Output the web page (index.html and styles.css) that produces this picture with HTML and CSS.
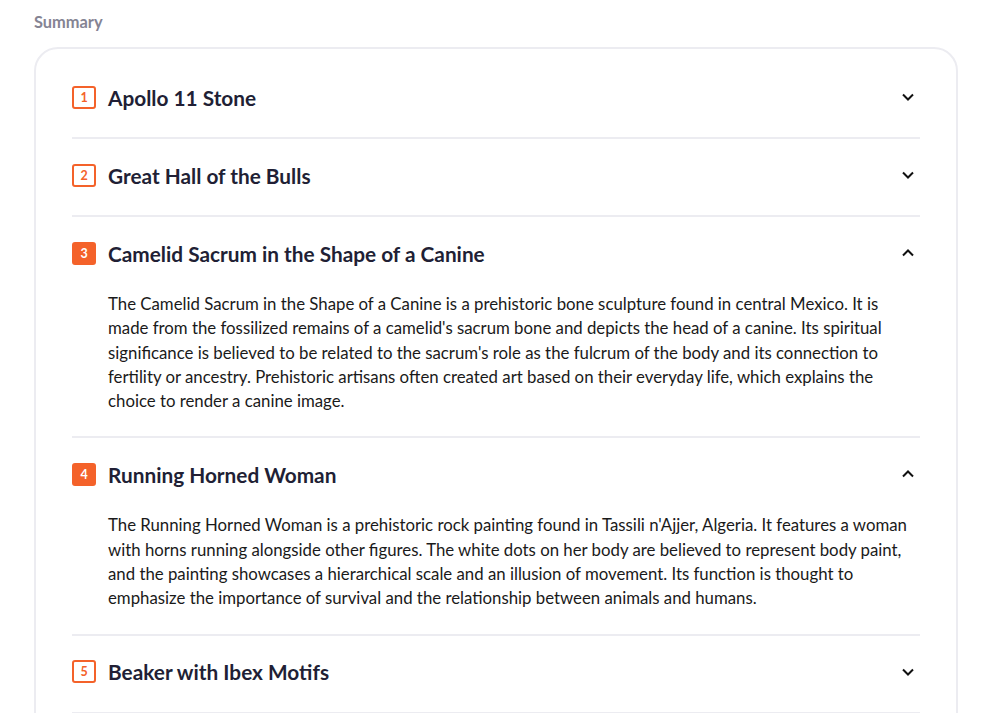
FILE: index.html
```html
<!DOCTYPE html>
<html>
<head>
<meta charset="utf-8">
<link rel="stylesheet" href="styles.css">
</head>
<body>
<div class="page">
  <div class="label">Summary</div>
  <div class="card">
    <div class="item">
      <div class="head"><span class="badge">1</span><span class="title">Apollo 11 Stone</span><svg class="chev" viewBox="0 0 12 8"><path d="M1 1.5l5 5 5-5" /></svg></div>
    </div>
    <div class="item">
      <div class="head"><span class="badge">2</span><span class="title">Great Hall of the Bulls</span><svg class="chev" viewBox="0 0 12 8"><path d="M1 1.5l5 5 5-5" /></svg></div>
    </div>
    <div class="item open">
      <div class="head"><span class="badge">3</span><span class="title">Camelid Sacrum in the Shape of a Canine</span><svg class="chev" viewBox="0 0 12 8"><path d="M1 6.5l5-5 5 5" /></svg></div>
      <p class="body">The Camelid Sacrum in the Shape of a Canine is a prehistoric bone sculpture found in central Mexico. It is made from the fossilized remains of a camelid's sacrum bone and depicts the head of a canine. Its spiritual significance is believed to be related to the sacrum's role as the fulcrum of the body and its connection to fertility or ancestry. Prehistoric artisans often created art based on their everyday life, which explains the choice to render a canine image.</p>
    </div>
    <div class="item open">
      <div class="head"><span class="badge">4</span><span class="title">Running Horned Woman</span><svg class="chev" viewBox="0 0 12 8"><path d="M1 6.5l5-5 5 5" /></svg></div>
      <p class="body">The Running Horned Woman is a prehistoric rock painting found in Tassili n'Ajjer, Algeria. It features a woman with horns running alongside other figures. The white dots on her body are believed to represent body paint, and the painting showcases a hierarchical scale and an illusion of movement. Its function is thought to emphasize the importance of survival and the relationship between animals and humans.</p>
    </div>
    <div class="item">
      <div class="head"><span class="badge">5</span><span class="title">Beaker with Ibex Motifs</span><svg class="chev" viewBox="0 0 12 8"><path d="M1 1.5l5 5 5-5" /></svg></div>
    </div>
  </div>
</div>
</body>
</html>
```
FILE: styles.css
```css
html, body {
  margin: 0;
  padding: 0;
  background: #fff;
}
body {
  font-family: "Lato", "Noto Sans", sans-serif;
  color: #1c1b2e;
}
.page {
  padding: 11px 34px 0 34px;
}
.label {
  font-size: 16.4px;
  font-weight: 700;
  color: #858493;
  line-height: 22px;
  margin-bottom: 14px;
}
.card {
  border: 2px solid #ececf1;
  border-radius: 24px;
  padding: 12px 36px 40px 36px;
}
.item {
  border-bottom: 2px solid #ececf1;
  padding-bottom: 4px;
}
.head {
  height: 72px;
  display: flex;
  align-items: center;
}
.badge {
  box-sizing: border-box;
  width: 24px;
  height: 23px;
  border: 2px solid #f4622a;
  border-radius: 3px;
  color: #f4622a;
  font-size: 12.5px;
  font-weight: 700;
  display: flex;
  align-items: center;
  justify-content: center;
  margin-right: 12px;
  flex: none;
}
.open .badge {
  background: #f4622a;
  color: #fff;
}
.title {
  flex: 1;
  font-size: 20.8px;
  font-weight: 700;
  color: #211f35;
}
.chev {
  width: 12px;
  height: 8px;
  margin-right: 6px;
  fill: none;
  stroke: #111;
  stroke-width: 2;
}
.body {
  margin: 0;
  padding: 3px 9px 19px 36px;
  font-size: 16.8px;
  line-height: 24.3px;
  color: #1a1a1a;
}
```
